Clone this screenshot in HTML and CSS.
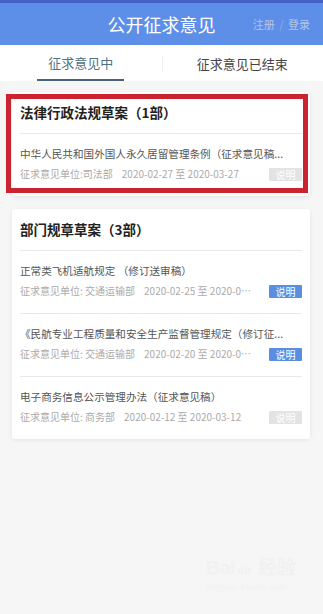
FILE: index.html
```html
<!DOCTYPE html>
<html lang="zh-CN">
<head>
    <meta charset="UTF-8">
    <meta name="viewport" content="width=device-width, initial-scale=1.0">
    <title>公开征求意见</title>
    <link rel="stylesheet" href="styles.css">
</head>
<body>
    <div class="header">
        <span></span>
        <h1>公开征求意见</h1>
        <div class="account">注册 <span class="slash">/</span> 登录</div>
    </div>
    <div class="tabs">
        <div class="tab active"><span>征求意见中</span></div>
        <div class="tab"><span>征求意见已结束</span></div>
    </div>

    <div class="list">
        <div class="card">
            <h2>法律行政法规草案（1部）</h2>
            <div class="item">
                <p class="item-title">中华人民共和国外国人永久居留管理条例（征求意见稿...</p>
                <div class="meta">
                    <span class="meta-text">征求意见单位:司法部<span class="date">2020-02-27 至 2020-03-27</span></span>
                    <span class="btn">说明</span>
                </div>
            </div>
            <div class="mark"></div>
        </div>

        <div class="card">
            <h2>部门规章草案（3部）</h2>
            <div class="item">
                <p class="item-title">正常类飞机适航规定 （修订送审稿）</p>
                <div class="meta">
                    <span class="meta-text">征求意见单位: 交通运输部<span class="date">2020-02-25 至 2020-0⋯</span></span>
                    <span class="btn blue">说明</span>
                </div>
            </div>
            <div class="item">
                <p class="item-title">《民航专业工程质量和安全生产监督管理规定（修订征...</p>
                <div class="meta">
                    <span class="meta-text">征求意见单位: 交通运输部<span class="date">2020-02-20 至 2020-0⋯</span></span>
                    <span class="btn blue">说明</span>
                </div>
            </div>
            <div class="item">
                <p class="item-title">电子商务信息公示管理办法（征求意见稿）</p>
                <div class="meta">
                    <span class="meta-text">征求意见单位: 商务部<span class="date">2020-02-12 至 2020-03-12</span></span>
                    <span class="btn">说明</span>
                </div>
            </div>
        </div>
    </div>

    <div class="watermark">
        <div class="wm-logo">Bai<span class="wm-du">du</span> 经验</div>
        <div class="wm-url">jingyan.baidu.com</div>
    </div>
</body>
</html>
```

FILE: styles.css
```css
body {
    margin: 0;
    background-color: #f6f6f6;
    font-family: "Noto Sans CJK SC", "Noto Sans", sans-serif;
    color: #333;
    min-height: 614px;
    position: relative;
    overflow: hidden;
}
.header {
    display: grid;
    grid-template-columns: 1fr auto 1fr;
    align-items: center;
    height: 42px;
    background-color: #5d8fe8;
    border-top: 3px solid #4661c6;
}
.header h1 {
    margin: 0;
    font-size: 18px;
    font-weight: normal;
    line-height: 24px;
    color: #fff;
}
.account {
    justify-self: end;
    padding-right: 13px;
    font-size: 11px;
    line-height: 16px;
    color: #b4c6e8;
}
.account .slash {
    color: #98aee0;
    margin: 0 2px;
}
.tabs {
    display: flex;
    height: 36px;
    background-color: #fff;
}
.tab {
    flex: 1;
    display: flex;
    justify-content: center;
    align-items: center;
    position: relative;
    font-size: 13px;
    color: #444;
}
.tab + .tab::before {
    content: "";
    position: absolute;
    left: 0;
    top: 10px;
    bottom: 10px;
    width: 1px;
    background-color: #f0f0f0;
}
.tab span {
    display: block;
    line-height: 34px;
    padding-top: 1px;
}
.tab.active span {
    color: #4e7186;
    padding: 1px 11px 0;
    border-bottom: 2px solid #4b6475;
    line-height: 32px;
}
.list {
    display: flex;
    flex-direction: column;
    gap: 13px;
    padding: 11px 13px 0 12px;
}
.card {
    position: relative;
    background-color: #fff;
    border-radius: 3px;
    padding: 0 8px;
    box-shadow: 0 1px 4px rgba(0,0,0,0.08);
}
.card h2 {
    margin: 0;
    height: 41px;
    line-height: 40px;
    font-size: 13.5px;
    font-weight: bold;
    color: #222;
}
.item {
    border-top: 1px solid #e8e8e8;
    padding: 12px 0 14px;
}
.item-title {
    margin: 0;
    font-size: 10.6px;
    line-height: 16px;
    color: #555;
    white-space: nowrap;
}
.meta {
    display: flex;
    align-items: center;
    margin-top: 4px;
    height: 16px;
}
.meta-text {
    flex: 1;
    min-width: 0;
    font-size: 10px;
    line-height: 16px;
    color: #aaa;
    white-space: nowrap;
}
.meta-text .date {
    margin-left: 9px;
}
.btn {
    width: 33px;
    height: 13px;
    line-height: 13px;
    text-align: center;
    font-size: 10px;
    color: #fff;
    background-color: #e3e3e3;
    border-radius: 1px;
}
.btn.blue {
    background-color: #5b8ee0;
}
.mark {
    position: absolute;
    left: -6px;
    top: 2px;
    width: 292px;
    height: 89px;
    border: 5px solid #cc2330;
    pointer-events: none;
}
.watermark {
    position: absolute;
    left: 206px;
    top: 557px;
    color: #f1f1f1;
    font-family: "Liberation Sans", sans-serif;
}
.wm-logo {
    font-size: 19px;
    font-weight: bold;
    line-height: 22px;
}
.wm-du {
    font-size: 11px;
    margin: 0 2px;
}
.wm-url {
    font-size: 9px;
    line-height: 12px;
    letter-spacing: 0.5px;
}
```
